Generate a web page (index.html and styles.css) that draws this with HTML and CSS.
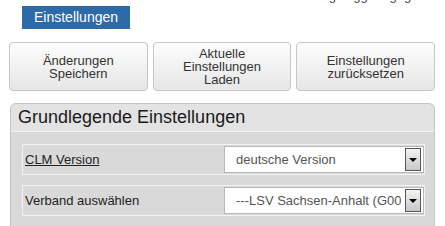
FILE: index.html
```html
<!DOCTYPE html>
<html lang="de">

<head>
    <meta charset="UTF-8">
    <link rel="stylesheet" href="styles.css">
    <title>Einstellungen</title>
</head>

<body>
    <div class="login-info">Eingeloggt Grgeg</div>
    <div class="tab">Einstellungen</div>
    <div class="actions">
        <a href="javascript:;" class="btn">Änderungen<br>Speichern</a>
        <a href="javascript:;" class="btn">Aktuelle<br>Einstellungen<br>Laden</a>
        <a href="javascript:;" class="btn">Einstellungen<br>zurücksetzen</a>
    </div>
    <div class="panel">
        <div class="panel-head">Grundlegende Einstellungen</div>
        <div class="panel-body">
            <div class="row">
                <span class="label"><u>CLM Version</u></span>
                <div class="select">
                    <span class="select-text">deutsche Version</span>
                    <span class="select-arrow"></span>
                </div>
            </div>
            <div class="row">
                <span class="label">Verband auswählen</span>
                <div class="select">
                    <span class="select-text">---LSV Sachsen-Anhalt (G00)</span>
                    <span class="select-arrow"></span>
                </div>
            </div>
            <div class="row"></div>
        </div>
    </div>
</body>

</html>
```

FILE: styles.css
```css
body {
    margin: 0;
    font-family: "Liberation Sans", Arial, sans-serif;
    font-size: 13px;
    color: #222;
    background: #fff;
    overflow: hidden;
    position: relative;
}

a {
    text-decoration: none;
}

/* header text above the visible area, only descenders show */
.login-info {
    position: absolute;
    top: -12px;
    left: 310px;
    font-size: 13px;
    line-height: 15px;
    color: #444;
}

.tab {
    margin: 6px 0 0 22px;
    width: 108px;
    height: 23px;
    line-height: 23px;
    text-align: center;
    background: #2c6aa8;
    color: #fff;
    font-size: 14px;
}

.actions {
    display: flex;
    gap: 5px;
    margin: 13px 10px 0 9px;
}

.btn {
    flex: 1;
    height: 47px;
    display: flex;
    align-items: center;
    justify-content: center;
    text-align: center;
    line-height: 13px;
    font-size: 13px;
    color: #333;
    border: 1px solid #c6c6c6;
    border-radius: 4px;
    background: linear-gradient(#fdfdfd, #e6e6e6);
}

.panel {
    margin: 12px 10px 0 10px;
    border: 1px solid #c4c4c4;
    border-radius: 6px 6px 0 0;
    background: #d9d9d9;
}

.panel-head {
    height: 27px;
    line-height: 27px;
    padding-left: 7px;
    font-size: 18px;
    color: #1a1a1a;
    background: #e3e3e3;
    border-radius: 6px 6px 0 0;
    border-bottom: 1px solid #f2f2f2;
}

.panel-body {
    padding: 12px 9px 0 11px;
    display: flex;
    flex-direction: column;
    gap: 10px;
}

.row {
    height: 29px;
    display: flex;
    align-items: center;
    justify-content: space-between;
    border: 1px solid #f3f3f3;
    padding-left: 2px;
}

.label {
    font-size: 13px;
    color: #222;
}

.select {
    width: 198px;
    height: 25px;
    display: flex;
    align-items: center;
    background: #fff;
    border: 1px solid #b8b8b8;
}

.select-text {
    flex: 1;
    overflow: hidden;
    white-space: nowrap;
    padding-left: 11px;
    font-size: 13px;
    color: #555;
}

.select-arrow {
    width: 14px;
    height: 21px;
    margin: 0 2px 0 4px;
    border: 1px solid #555;
    background: linear-gradient(#f4f4f4, #c8c8c8);
    position: relative;
}

.select-arrow::after {
    content: "";
    position: absolute;
    left: 3px;
    top: 9px;
    border-left: 4px solid transparent;
    border-right: 4px solid transparent;
    border-top: 4px solid #000;
}
```
